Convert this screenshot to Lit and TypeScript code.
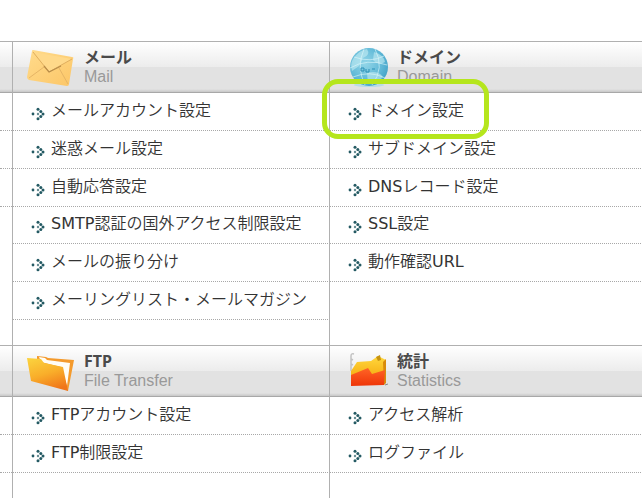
import { LitElement, html, css, svg, nothing } from "lit";
import { customElement, property } from "lit/decorators.js";

type Section = { icon: string; title: string; sub: string; items: string[]; marked?: string };

const mail: Section = {
  icon: "mail", title: "メール", sub: "Mail",
  items: ["メールアカウント設定", "迷惑メール設定", "自動応答設定", "SMTP認証の国外アクセス制限設定", "メールの振り分け", "メーリングリスト・メールマガジン"],
};
const domain: Section = {
  icon: "domain", title: "ドメイン", sub: "Domain", marked: "ドメイン設定",
  items: ["ドメイン設定", "サブドメイン設定", "DNSレコード設定", "SSL設定", "動作確認URL"],
};
const ftp: Section = { icon: "ftp", title: "FTP", sub: "File Transfer", items: ["FTPアカウント設定", "FTP制限設定"] };
const stats: Section = { icon: "stats", title: "統計", sub: "Statistics", items: ["アクセス解析", "ログファイル"] };

const icons: Record<string, unknown> = {
  mail: svg`
    <defs><linearGradient id="m" x1="0" y1="0" x2="1" y2="1"><stop offset="0" stop-color="#ffdb8c"/><stop offset="1" stop-color="#fcc667"/></linearGradient></defs>
    <path d="M5 5 Q5 4 6 4 L45 11 Q47 11 46 13 L42 38 Q42 40 40 40 L2 34 Q0 33 0 31 Z" fill="url(#m)"/>
    <path d="M2 32 L17 21 M41 38 L32 22" stroke="#e6b565" fill="none"/>
    <path d="M6 6 L22 26 L45 13" fill="#ffd98a" stroke="#e0ae5e"/>
    <path d="M17 20 L22 26 L34 20" fill="none" stroke="#b98d49" stroke-width="1.2"/>`,
  domain: svg`
    <defs><radialGradient id="g" cx=".4" cy=".4" r=".65"><stop offset="0" stop-color="#93d6e8"/><stop offset=".65" stop-color="#62bad8"/><stop offset="1" stop-color="#45a3c8"/></radialGradient></defs>
    <ellipse cx="22" cy="39" rx="15" ry="2" fill="#b9dce5"/>
    <circle cx="22" cy="21" r="19" fill="url(#g)"/>
    <path d="M6 13 Q12 4 20 3 Q24 9 16 12 L12 20 L5 25 Q3 18 6 13 M27 6 Q37 9 38 16 Q31 20 26 14 Z M20 27 Q31 24 36 31 Q30 38 21 38 Z" fill="#c4edf4" opacity=".6"/>
    <path d="M3 22 Q20 12 40 19 M7 11 Q24 17 37 10 M6 31 Q23 24 38 32 M17 3 Q9 21 18 39 M28 3 Q38 22 25 39" fill="none" stroke="#e1f8fb" opacity=".6"/>
    <path d="M14 22 h3 v3 h-3 z M19 23 v3 h3 v-3 M25 23 h3" fill="none" stroke="#2b8fb6"/>`,
  ftp: svg`
    <defs><linearGradient id="f" x1=".2" y1="0" x2=".6" y2="1"><stop offset="0" stop-color="#fbd03d"/><stop offset=".5" stop-color="#f9ae2a"/><stop offset="1" stop-color="#f0751a"/></linearGradient></defs>
    <path d="M10 6 L19 7 L21 8 L47 10 L41 41 L10 20 Z" fill="#f49a2c"/>
    <path d="M12 7 L18 8 L20 10 L43 13 L40 36 L34 17 L14 12 Z" fill="#fffdf6"/>
    <path d="M0 8 L14 9 L17 13 L36 17 L41 41 L4 31 Z" fill="url(#f)"/>`,
  stats: svg`
    <defs><linearGradient id="y" x2="0" y2="1"><stop stop-color="#ffd83e"/><stop offset="1" stop-color="#f6ae12"/></linearGradient><linearGradient id="r" x2="0" y2="1"><stop stop-color="#ff6426"/><stop offset="1" stop-color="#ee3508"/></linearGradient></defs>
    <path d="M4 21 V6 Q4 3 7 4 M4 9 l2 1 M4 14 l2 1" fill="none" stroke="#c2c2c2" stroke-width="1.5"/>
    <path d="M4 21 L10 12 L24 11 L31 6 L39 10 V27 H4 Z" fill="url(#y)"/>
    <path d="M29 7 L33 5 L34 10 L31 11 Z" fill="#c69310"/>
    <path d="M36 12 L39 9 V33 L37 35 Z" fill="#d88b0b"/>
    <path d="M4 25 L21 18 L25 24 L38 20 L37 35 L4 36 Z" fill="url(#r)"/>
    <path d="M38 35 l3 -1" stroke="#888"/>`,
};

@customElement("menu-section")
class MenuSection extends LitElement {
  @property({ attribute: false }) data?: Section;
  @property({ type: Number }) blanks = 0;
  static styles = css`
    :host { display: flex; flex-direction: column; min-width: 0; border-left: 1px solid #b0b0b0; }
    :host([edge]) { border-left: 0; }
    .head { box-sizing: border-box; height: 52px; display: flex; gap: 7px; padding: 0 14px;
      border-top: 1px solid #b0b0b0; border-bottom: 1px solid #a8a8a8;
      background: linear-gradient(#ffffff 0%, #ececec 50%, #e2e2e2 50%, #e2e2e2 94%, #c8c8c8 100%); }
    .icon { width: 50px; height: 44px; margin-top: 4px; flex: none; }
    .icon.narrow { width: 46px; }
    .names { padding-top: 5px; white-space: nowrap; }
    h2 { margin: 0; font-size: 16px; line-height: 20px; font-weight: 700; color: #4a4a4a; }
    p { margin: 0; font: 16px/20px "Liberation Sans", Arial, sans-serif; color: #999; }
    ul { list-style: none; margin: 0 1px 0 0; padding: 0 0 25px; }
    li { box-sizing: border-box; height: 38px; padding: 0 18px 2px; display: flex; align-items: center;
      border-bottom: 1px dotted #a8a8a8; white-space: nowrap; }
    li:nth-child(4n) { height: 37px; }
    a { position: relative; display: flex; align-items: center; gap: 6px; color: #333; text-decoration: none;
      font: 16px/24px "DejaVu Sans", "Noto Sans CJK JP DemiLight", "Noto Sans CJK JP", sans-serif; }
    .bullet { width: 14px; height: 14px; margin-top: 6px; flex: none; fill: #245a63; }
    .mark { position: absolute; left: -26px; right: -25px; top: -20px; bottom: -16px; z-index: 1;
      border: 5px solid #b5e61d; border-radius: 16px; pointer-events: none; }
  `;
  render() {
    const d = this.data;
    const narrow = d && (d.icon === "domain" || d.icon === "stats");
    return html`
      <div class="head">
        ${d ? html`
          <svg class="icon ${narrow ? "narrow" : ""}" viewBox="${narrow ? "-3 0 46 44" : "0 0 50 44"}" aria-hidden="true">${icons[d.icon]}</svg>
          <div class="names"><h2>${d.title}</h2><p>${d.sub}</p></div>` : nothing}
      </div>
      <ul>
        ${d ? d.items.map((t) => html`<li><a href="#">
          <svg class="bullet" viewBox="0 0 14 14" aria-hidden="true">
            <circle cx="2" cy="7" r="1.4"/><circle cx="7" cy="2.3" r="1.5"/><circle cx="9.8" cy="4.6" r="1.5"/>
            <circle cx="7" cy="7" r="1.2" opacity=".7"/><circle cx="12" cy="7" r="1.5"/><circle cx="9.8" cy="9.4" r="1.5"/><circle cx="7" cy="11.7" r="1.5"/>
          </svg>
          ${t}${t === d.marked ? html`<span class="mark"></span>` : nothing}</a></li>`)
        : Array.from({ length: this.blanks }, () => html`<li></li>`)}
      </ul>`;
  }
}

@customElement("app-root")
class AppRoot extends LitElement {
  static styles = css`
    :host { display: block; min-height: 100vh; box-sizing: border-box; padding-top: 41px; overflow: hidden; background: #fff;
      font-family: "Noto Sans", "Noto Sans CJK JP", sans-serif; }
    .grid { display: grid; grid-template-columns: 12px minmax(0, 317fr) minmax(0, 313fr); }
  `;
  render() {
    return html`<main class="grid">
      <menu-section edge blanks="3"></menu-section><menu-section .data=${mail}></menu-section><menu-section .data=${domain}></menu-section>
      <menu-section edge blanks="2"></menu-section><menu-section .data=${ftp}></menu-section><menu-section .data=${stats}></menu-section>
    </main>`;
  }
}
